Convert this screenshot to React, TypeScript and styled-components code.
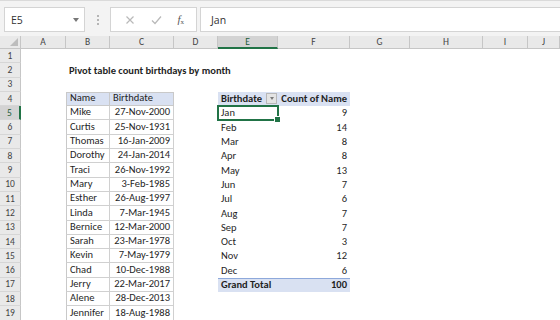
import styled, { createGlobalStyle, css } from "styled-components";

const GlobalStyle = createGlobalStyle`
    * {
        box-sizing: border-box;
    }
    body {
        margin: 0;
        background: #ffffff;
        font-family: Carlito, Lato, "Liberation Sans", sans-serif;
    }
`;

const GREEN = "#217346";

const Window = styled.div`
    width: 560px;
    height: 320px;
    overflow: hidden;
    background: #ffffff;
    display: flex;
    flex-direction: column;
`;

const FormulaBar = styled.div`
    height: 36px;
    flex-shrink: 0;
    display: flex;
    align-items: flex-start;
    padding: 6px 0 0 4px;
    background: #f3f3f3;
    border-top: 1px solid #dadada;
`;

const NameBox = styled.div`
    width: 81px;
    height: 25px;
    display: flex;
    align-items: center;
    justify-content: space-between;
    padding: 0 5px 0 6px;
    background: #ffffff;
    border: 1px solid #d4d4d4;
    font-family: "Open Sans", "Liberation Sans", sans-serif;
    font-size: 10.5px;
    color: #333333;
`;

const Caret = styled.span`
    width: 0;
    height: 0;
    border-left: 3.5px solid transparent;
    border-right: 3.5px solid transparent;
    border-top: 4px solid #777777;
`;

const Grip = styled.div`
    width: 25px;
    height: 25px;
    display: flex;
    flex-direction: column;
    align-items: center;
    justify-content: center;
    gap: 2px;

    span {
        width: 2px;
        height: 2px;
        background: #b5b5b5;
    }
`;

const FxBox = styled.div`
    width: 87px;
    height: 25px;
    display: flex;
    align-items: center;
    justify-content: space-around;
    padding: 0 4px 0 6px;
    background: #ffffff;
    border: 1px solid #d4d4d4;
`;

const FxLabel = styled.span`
    font-family: "Liberation Serif", serif;
    font-style: italic;
    font-size: 11px;
    color: #555555;

    sub {
        font-size: 7px;
        font-style: normal;
        vertical-align: -1px;
    }
`;

const FormulaInput = styled.div`
    flex: 1;
    height: 25px;
    margin-left: 3px;
    display: flex;
    align-items: center;
    padding-left: 10px;
    background: #ffffff;
    border: 1px solid #d4d4d4;
    border-right: none;
    font-family: "Open Sans", "Liberation Sans", sans-serif;
    font-size: 10.5px;
    color: #333333;
`;

const Sheet = styled.div`
    display: grid;
    grid-template-columns: 21px 45px 44px 64px 44px 60px 72px 60px 73px 45px 1fr;
    grid-template-rows: 13px;
    grid-auto-rows: 14.3px;
    font-size: 10.5px;
    color: #1f1f1f;
`;

const Corner = styled.div`
    background: #e9e9e9;
    border-right: 1px solid #c6c6c6;
    border-bottom: 1px solid #c6c6c6;
    display: flex;
    align-items: flex-end;
    justify-content: flex-end;
    padding: 0 2px 2px 0;
`;

const ColHead = styled.div<{ $active?: boolean }>`
    display: flex;
    align-items: center;
    justify-content: center;
    font-size: 9.5px;
    background: ${p => (p.$active ? "#d3d3d3" : "#e9e9e9")};
    border-right: 1px solid #c6c6c6;
    border-bottom: ${p => (p.$active ? `2px solid ${GREEN}` : "1px solid #c6c6c6")};
    color: ${p => (p.$active ? "#1d5c38" : "#444444")};
`;

const RowHead = styled.div<{ $active?: boolean }>`
    display: flex;
    align-items: center;
    justify-content: center;
    font-size: 9.5px;
    color: ${p => (p.$active ? "#1d5c38" : "#444444")};
    background: ${p => (p.$active ? "#d3d3d3" : "#e9e9e9")};
    border-bottom: 1px solid #d6d6d6;
    border-right: ${p => (p.$active ? `2px solid ${GREEN}` : "1px solid #c6c6c6")};
`;

type Variant = "plain" | "listHead" | "listBody" | "pivotHead" | "pivotTotal";

const variantStyles: Record<Variant, ReturnType<typeof css>> = {
    plain: css``,
    listHead: css`
        background: #d9e1f2;
        border-top: 1px solid #c9c9c9;
        border-bottom: 1px solid #c9c9c9;
        border-right: 1px solid #c9c9c9;
    `,
    listBody: css`
        border-bottom: 1px solid #d0d0d0;
        border-right: 1px solid #d0d0d0;
    `,
    pivotHead: css`
        background: #d9e1f2;
        font-weight: bold;
    `,
    pivotTotal: css`
        background: #d9e1f2;
        border-top: 1px solid #8ea9db;
        font-weight: bold;
    `,
};

const Cell = styled.div<{ $variant: Variant; $align: "left" | "right"; $bold?: boolean; $first?: boolean }>`
    position: relative;
    display: flex;
    align-items: flex-end;
    justify-content: ${p => (p.$align === "right" ? "flex-end" : "flex-start")};
    padding: 0 3px 1px 3px;
    white-space: nowrap;
    overflow: visible;
    font-weight: ${p => (p.$bold ? "bold" : "normal")};
    ${p => variantStyles[p.$variant]}
    ${p => p.$first && css`
        border-left: 1px solid #c9c9c9;
    `}
`;

const FilterButton = styled.span`
    margin-left: auto;
    margin-right: -2px;
    align-self: center;
    width: 11px;
    height: 11px;
    display: flex;
    align-items: center;
    justify-content: center;
    background: #e4e4e4;
    border: 1px solid #b8b8b8;

    &::after {
        content: "";
        border-left: 2.5px solid transparent;
        border-right: 2.5px solid transparent;
        border-top: 3px solid #7a7a7a;
    }
`;

const Selection = styled.span`
    position: absolute;
    left: -1px;
    top: -1px;
    right: -1px;
    bottom: -1px;
    border: 2px solid ${GREEN};
    pointer-events: none;

    &::after {
        content: "";
        position: absolute;
        right: -4px;
        bottom: -4px;
        width: 5px;
        height: 5px;
        background: ${GREEN};
        border: 1px solid #ffffff;
    }
`;

type CellSpec = {
    text?: string;
    align?: "left" | "right";
    bold?: boolean;
    variant?: Variant;
    first?: boolean;
    filter?: boolean;
    selected?: boolean;
};

const COLUMNS = ["A", "B", "C", "D", "E", "F", "G", "H", "I", "J"];

const people: [string, string][] = [
    ["Mike", "27-Nov-2000"],
    ["Curtis", "25-Nov-1931"],
    ["Thomas", "16-Jan-2009"],
    ["Dorothy", "24-Jan-2014"],
    ["Traci", "26-Nov-1992"],
    ["Mary", "3-Feb-1985"],
    ["Esther", "26-Aug-1997"],
    ["Linda", "7-Mar-1945"],
    ["Bernice", "12-Mar-2000"],
    ["Sarah", "23-Mar-1978"],
    ["Kevin", "7-May-1979"],
    ["Chad", "10-Dec-1988"],
    ["Jerry", "22-Mar-2017"],
    ["Alene", "28-Dec-2013"],
    ["Jennifer", "18-Aug-1988"],
];

const months: [string, number][] = [
    ["Jan", 9], ["Feb", 14], ["Mar", 8], ["Apr", 8], ["May", 13], ["Jun", 7],
    ["Jul", 6], ["Aug", 7], ["Sep", 7], ["Oct", 3], ["Nov", 12], ["Dec", 6],
];

// builds the content of one sheet row, keyed by column letter
function rowCells(row: number): Record<string, CellSpec> {
    const cells: Record<string, CellSpec> = {};

    if (row === 2) {
        cells.B = { text: "Pivot table count birthdays by month", bold: true };
    }

    if (row === 4) {
        cells.B = { text: "Name", variant: "listHead", first: true };
        cells.C = { text: "Birthdate", variant: "listHead" };
        cells.E = { text: "Birthdate", variant: "pivotHead", filter: true };
        cells.F = { text: "Count of Name", variant: "pivotHead", align: "right" };
    }

    const person = people[row - 5];
    if (person) {
        cells.B = { text: person[0], variant: "listBody", first: true };
        cells.C = { text: person[1], variant: "listBody", align: "right" };
    }

    const month = months[row - 5];
    if (month) {
        cells.E = { text: month[0], selected: row === 5 };
        cells.F = { text: String(month[1]), align: "right" };
    }

    if (row === 17) {
        cells.E = { text: "Grand Total", variant: "pivotTotal" };
        cells.F = { text: "100", variant: "pivotTotal", align: "right" };
    }

    return cells;
}

const rows = Array.from({ length: 19 }, (_, i) => i + 1);

function App() {
    return (
        <>
            <GlobalStyle />
            <Window>
                <FormulaBar>
                    <NameBox>
                        E5
                        <Caret />
                    </NameBox>
                    <Grip>
                        <span />
                        <span />
                        <span />
                    </Grip>
                    <FxBox>
                        <svg width="10" height="10" viewBox="0 0 10 10">
                            <path d="M1.5 1.5 L8.5 8.5 M8.5 1.5 L1.5 8.5" stroke="#b9b9b9" strokeWidth="1.2" />
                        </svg>
                        <svg width="11" height="10" viewBox="0 0 11 10">
                            <path d="M1 5.5 L4 8.5 L10 1.5" stroke="#b9b9b9" strokeWidth="1.2" fill="none" />
                        </svg>
                        <FxLabel>
                            f<sub>x</sub>
                        </FxLabel>
                    </FxBox>
                    <FormulaInput>Jan</FormulaInput>
                </FormulaBar>

                <Sheet>
                    <Corner>
                        <svg width="8" height="8" viewBox="0 0 8 8">
                            <path d="M8 0 L8 8 L0 8 Z" fill="#bdbdbd" />
                        </svg>
                    </Corner>
                    {COLUMNS.map(col => (
                        <ColHead key={col} $active={col === "E"}>
                            {col}
                        </ColHead>
                    ))}

                    {rows.map(row => {
                        const cells = rowCells(row);
                        return [
                            <RowHead key={`h${row}`} $active={row === 5}>
                                {row}
                            </RowHead>,
                            ...COLUMNS.map(col => {
                                const c = cells[col] ?? {};
                                return (
                                    <Cell
                                        key={`${col}${row}`}
                                        $variant={c.variant ?? "plain"}
                                        $align={c.align ?? "left"}
                                        $bold={c.bold}
                                        $first={c.first}
                                    >
                                        {c.text}
                                        {c.filter && <FilterButton />}
                                        {c.selected && <Selection />}
                                    </Cell>
                                );
                            }),
                        ];
                    })}
                </Sheet>
            </Window>
        </>
    );
}

export default App;
